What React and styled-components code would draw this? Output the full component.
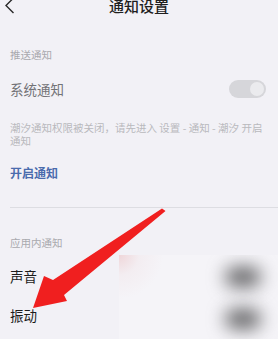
import React from "react";
import styled, { createGlobalStyle } from "styled-components";

const GlobalStyle = createGlobalStyle`
  html, body {
    margin: 0;
    padding: 0;
    background: #f2f1f6;
  }
  body {
    font-family: "Noto Sans CJK SC", "Noto Sans", sans-serif;
    overflow: hidden;
  }
`;

const Page = styled.div`
  position: relative;
  width: 278px;
  height: 339px;
  overflow: hidden;
  background: #f2f1f6;
`;

const Header = styled.div`
  display: grid;
  grid-template-columns: 1fr auto 1fr;
  align-items: center;
  height: 28px;
  margin-top: -8px;
`;

const Back = styled.div`
  display: flex;
  align-items: center;
  padding-left: 4px;
`;

const Title = styled.div`
  font-size: 15px;
  font-weight: 500;
  color: #1f1f1f;
  line-height: 18px;
`;

const SectionLabel = styled.div`
  font-size: 10.5px;
  line-height: 14px;
  color: #a9a9ae;
  padding-left: 10px;
  margin-top: ${p => p.top}px;
`;

const Row = styled.div`
  display: flex;
  align-items: center;
  justify-content: space-between;
  height: ${p => p.h}px;
  padding: 0 12px 0 10px;
  margin-top: ${p => p.top || 0}px;
`;

const RowText = styled.span`
  font-size: 13.5px;
  color: ${p => (p.muted ? "#737376" : "#1c1c1c")};
`;

const Toggle = styled.div`
  width: 37px;
  height: 18px;
  border-radius: 9px;
  background: #d6d6da;
  display: flex;
  align-items: center;
  justify-content: flex-end;
  padding: 0 2px;
  box-sizing: border-box;
`;

const Knob = styled.div`
  width: 14px;
  height: 14px;
  border-radius: 50%;
  background: #ebebee;
`;

const Hint = styled.div`
  font-size: 10.5px;
  line-height: 13px;
  color: #b9b9bd;
  padding: 0 10px;
  margin-top: 4.5px;
`;

const Link = styled.div`
  font-size: 12px;
  line-height: 16px;
  font-weight: 700;
  color: #4a6bad;
  padding-left: 10px;
  margin-top: 18.5px;
`;

const Divider = styled.div`
  height: 1px;
  background: #dddde2;
  margin: 26px 0 0 10px;
`;

const Mosaic = styled.div`
  position: absolute;
  left: 119px;
  top: 255px;
  right: 0;
  bottom: 0;
  background: radial-gradient(circle at 0 0, #efd6d9 0, #f3edf1 20px, #f5f4f8 44px);
  display: flex;
  flex-direction: column;
  align-items: flex-end;
  padding: 12px 17px 0 0;
  gap: 22px;
  overflow: hidden;
`;

const Blob = styled.div`
  width: 36px;
  height: 20px;
  border-radius: 10px;
  background: #636365;
  filter: blur(9px);
`;

const Arrow = styled.svg`
  position: absolute;
  left: 0;
  top: 0;
  pointer-events: none;
`;

export default function App() {
  return (
    <Page>
      <GlobalStyle />
      <Header>
        <Back>
          <svg width="12" height="18" viewBox="0 0 12 18">
            <polyline points="9.5,1 2,8.5 9.5,16" fill="none" stroke="#2a2a2a" strokeWidth="1.4" />
          </svg>
        </Back>
        <Title>通知设置</Title>
        <div />
      </Header>

      <SectionLabel top={28}>推送通知</SectionLabel>
      <Row h={54}>
        <RowText muted>系统通知</RowText>
        <Toggle>
          <Knob />
        </Toggle>
      </Row>
      <Hint>潮汐通知权限被关闭，请先进入 设置 - 通知 - 潮汐 开启通知</Hint>
      <Link>开启通知</Link>
      <Divider />

      <SectionLabel top={27.5}>应用内通知</SectionLabel>
      <Row h={39} top={7}>
        <RowText>声音</RowText>
      </Row>
      <Row h={39}>
        <RowText>振动</RowText>
      </Row>

      <Mosaic>
        <Blob />
        <Blob />
      </Mosaic>

      <Arrow width="278" height="339" viewBox="0 0 278 339">
        <polygon
          points="162,208.5 165.5,211 64,295 67,301 33,308 44,276 53,280"
          fill="#f01f1f"
        />
      </Arrow>
    </Page>
  );
}
